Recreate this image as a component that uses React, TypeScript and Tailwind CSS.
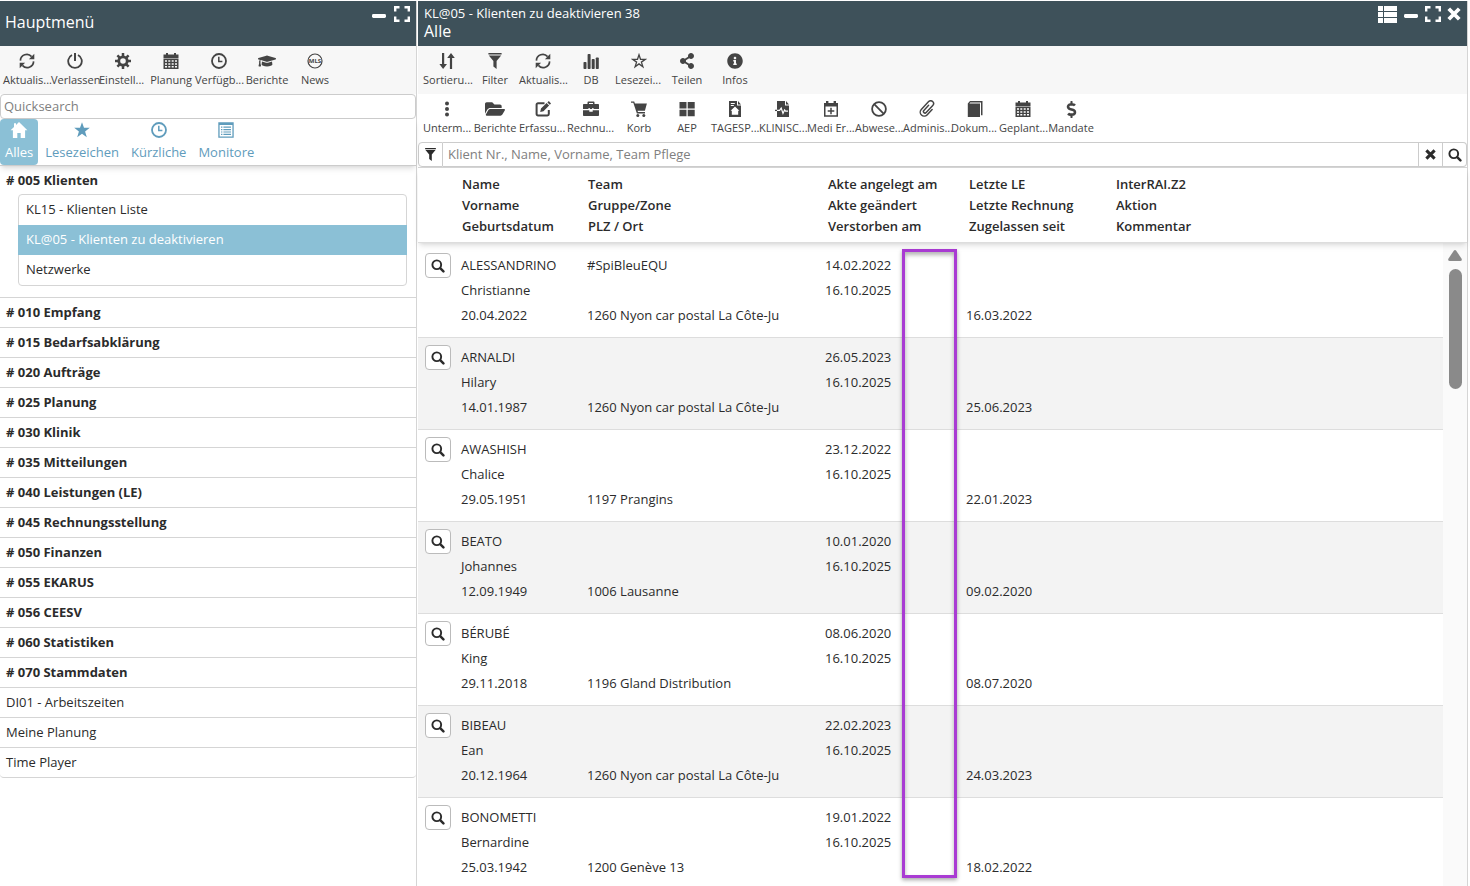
import type { ReactNode } from 'react'
import { FaGraduationCap, FaInfoCircle, FaShareAlt, FaFolderOpen, FaDollarSign } from 'react-icons/fa'

function Svg({ children, className = 'size-4' }: { children: ReactNode; className?: string }) {
  return (
    <svg viewBox="0 0 16 16" className={className} fill="currentColor" stroke="none" aria-hidden="true">
      {children}
    </svg>
  )
}

const line = { fill: 'none', stroke: 'currentColor' }

const RefreshIcon = () => (
  <Svg>
    <path {...line} strokeWidth="1.7" d="M1.4 7.6A6.4 6.4 0 0 1 12.6 3.6M14.6 8.4A6.4 6.4 0 0 1 3.4 12.4" />
    <path d="M15.3.8v5.4H9.9zM.7 15.2V9.8h5.4z" />
  </Svg>
)

const PowerIcon = () => (
  <Svg>
    <path {...line} strokeWidth="1.8" d="M5 2A6.8 6.8 0 1 0 11 2" />
    <path {...line} strokeWidth="2" d="M8 0v8" />
  </Svg>
)

const GearIcon = () => (
  <Svg>
    <circle {...line} cx="8" cy="8" r="4.2" strokeWidth="2.8" />
    <path {...line} strokeWidth="2.5" d="M8 0v3M8 13v3M0 8h3M13 8h3M2.4 2.4l2 2M11.6 11.6l2 2M2.4 13.6l2-2M11.6 4.4l2-2" />
  </Svg>
)

const CalendarIcon = () => (
  <Svg>
    <path d="M3 0h2v1.5h6V0h2v1.5h2.5V5H.5V1.5H3z" />
    <path fillRule="evenodd" d="M.5 5.6h15V16H.5zM2 7.3v1.5h2V7.3zm3.3 0v1.5h2V7.3zm3.4 0v1.5h2V7.3zm3.3 0v1.5h2V7.3zM2 10.2v1.5h2v-1.5zm3.3 0v1.5h2v-1.5zm3.4 0v1.5h2v-1.5zm3.3 0v1.5h2v-1.5zM2 13.1v1.5h2v-1.5zm3.3 0v1.5h2v-1.5zm3.4 0v1.5h2v-1.5zm3.3 0v1.5h2v-1.5z" />
  </Svg>
)

const ClockIcon = () => (
  <Svg>
    <circle {...line} cx="8" cy="8" r="7" strokeWidth="1.8" />
    <path {...line} strokeWidth="1.5" d="M7.8 3.8v4.6h3.6" />
  </Svg>
)

const NewsIcon = () => (
  <Svg>
    <circle {...line} cx="8" cy="8" r="7" strokeWidth="1.2" />
    <path fill="#f7f7f7" d="M2 5.4h12v5.2H2z" />
    <text x="8" y="10.2" textAnchor="middle" fontSize="6" fontWeight="700">MLS</text>
  </Svg>
)

const SortIcon = () => (
  <Svg>
    <path d="M3 0h2.2v11H8l-3.9 5L.4 11H3zM10.9 16h2.2V5h2.7L12 0 8.2 5h2.7z" />
  </Svg>
)

const FilterIcon = ({ className }: { className?: string }) => (
  <Svg className={className}>
    <path d="M1.4 0h13.2v1.5H1.4zM1.8 2.6h12.4L9.6 8v8l-3.2-2.4V8z" />
  </Svg>
)

const BarsIcon = () => (
  <Svg>
    <rect x=".5" y="9" width="3" height="7" rx=".8" />
    <rect x="4.6" y="1" width="3" height="15" rx=".8" />
    <rect x="8.7" y="6" width="3" height="10" rx=".8" />
    <rect x="12.8" y="4.5" width="3" height="11.5" rx=".8" />
  </Svg>
)

const StarOutlineIcon = () => (
  <Svg>
    <path {...line} strokeWidth="1.3" d="M8 1.8l1.5 4.5h4.8l-3.9 2.8 1.5 4.6L8 10.9l-3.9 2.8 1.5-4.6-3.9-2.8h4.8z" />
  </Svg>
)

const StarIcon = () => (
  <Svg>
    <path d="M8 .2l2 5.6h5.8l-4.7 3.6 1.7 5.9L8 11.8l-4.8 3.5 1.7-5.9L.2 5.8H6z" />
  </Svg>
)

const DotsIcon = () => (
  <Svg>
    <circle cx="8" cy="2.4" r="2" />
    <circle cx="8" cy="8" r="2" />
    <circle cx="8" cy="13.6" r="2" />
  </Svg>
)

const EditIcon = () => (
  <Svg>
    <path {...line} strokeWidth="2" d="M9.5 2.2H3a1.4 1.4 0 0 0-1.4 1.4V13A1.4 1.4 0 0 0 3 14.4h9.4a1.4 1.4 0 0 0 1.4-1.4V9" />
    <path d="M5.2 11l.8-3.4 5.6-5.5 2.5 2.5-5.6 5.6zM12.4 1.4L13.8 0 16 2.4l-1.2 1.4z" />
  </Svg>
)

const BriefcaseIcon = () => (
  <Svg>
    <path fillRule="evenodd" d="M4.5 3V1.4Q4.5.5 5.4.5h5.2q.9 0 .9.9V3h3.7q.8 0 .8.8V8h-5.5V7H9.2v1H6.8V7H5.5v1H0V3.8Q0 3 .8 3zM6 3h4V2H6z" />
    <path d="M0 9.3h6.3v1.4h3.4V9.3H16v4.9q0 .8-.8.8H.8q-.8 0-.8-.8z" />
  </Svg>
)

const CartIcon = () => (
  <Svg>
    <path d="M0 .5h3.2l.7 1.9h12l-2 7.4H6.5l.5 1.3h7v1.3H5.9L2.3 1.8H0z" />
    <circle cx="6.8" cy="14.4" r="1.5" />
    <circle cx="12.8" cy="14.4" r="1.5" />
  </Svg>
)

const GridIcon = () => (
  <Svg>
    <path d="M.5 1h7v6.5h-7zM8.7 1h7v6.5h-7zM.5 8.7h7v6.5h-7zM8.7 8.7h7v6.5h-7z" />
  </Svg>
)

const HomeFileIcon = () => (
  <Svg>
    <path fillRule="evenodd" d="M2 0h8v4.4h4V16H2zM3.8 2v1.1h4V2zM3.8 4v1.1h3V4zM8 5.6L3.6 9.7h1.2v4h6.4v-4h1.2z" />
    <path d="M11 0l3 3.4h-3z" />
  </Svg>
)

const PulseFileIcon = () => (
  <Svg>
    <path d="M2 0h8v4.6h4V16H2z" />
    <path d="M11 0l3 3.6h-3z" />
    <path {...line} strokeWidth="1.3" d="M0 9.4h3" />
    <path {...line} stroke="#fff" strokeWidth="1.2" d="M2 9.4h2.6L6.2 7l1.8 5.4L9.6 9l.9 1.2H13" />
  </Svg>
)

const CalendarPlusIcon = () => (
  <Svg>
    <path d="M3 0h2.4v2h5.2V0H13v2h2v3.6H1V2h2z" />
    <path {...line} strokeWidth="1.5" d="M1.75 5v10h12.5V5M8 6.7v6.6M4.7 10h6.6" />
  </Svg>
)

const BanIcon = () => (
  <Svg>
    <circle {...line} cx="8" cy="8" r="6.9" strokeWidth="1.8" />
    <path {...line} strokeWidth="1.8" d="M3.2 3.2l9.6 9.6" />
  </Svg>
)

const ClipIcon = () => (
  <Svg className="size-[18px]">
    <g transform="rotate(43 8 8)">
      <path {...line} strokeWidth="1.3" strokeLinecap="round" d="M11.6 5.2v6.6a3.5 3.5 0 0 1-7 0V2.2a2.5 2.5 0 0 1 5 0v8.6a1.4 1.4 0 0 1-2.8 0V4.6" />
    </g>
  </Svg>
)

const BookIcon = () => (
  <Svg>
    <path d="M3 0h12.5v14.2H14V1.6H3.2L2.4 2.6H13V16H.8V2.6z" />
  </Svg>
)

const MonitorIcon = () => (
  <Svg>
    <path fillRule="evenodd" d="M.3.3h15.4v15.4H.3zM1.6 3v11.4h12.8V3z" />
    <path d="M3 4.6h1.4v1.2H3zM5.4 4.6H13v1.2H5.4zM3 7h1.4v1.2H3zM5.4 7H13v1.2H5.4zM3 9.4h1.4v1.2H3zM5.4 9.4H13v1.2H5.4zM3 11.8h1.4V13H3zM5.4 11.8H13V13H5.4z" />
  </Svg>
)

const HomeIcon = () => (
  <Svg className="h-4 w-5">
    <path d="M8 0l8.4 8.2h-2.3V16H9.7v-5H6.3v5H1.9V8.2H-.4L3 4.9V1.3h2V3z" />
  </Svg>
)

const SearchIcon = () => (
  <Svg className="size-[14px]">
    <circle {...line} cx="6.6" cy="6.6" r="5" strokeWidth="2.2" />
    <path {...line} strokeWidth="2.8" strokeLinecap="round" d="M10.8 10.8l3.4 3.4" />
  </Svg>
)

const CloseIcon = ({ className }: { className?: string }) => (
  <Svg className={className}>
    <path {...line} strokeWidth="4.4" d="M2 2l12 12M14 2L2 14" />
  </Svg>
)

const MinusIcon = () => (
  <Svg>
    <rect x="1" y="8" width="14" height="4" rx="1.4" />
  </Svg>
)

const ExpandIcon = () => (
  <Svg>
    <path {...line} strokeWidth="2.4" d="M1.2 5.5V1.2h4.3M10.5 1.2h4.3v4.3M14.8 10.5v4.3h-4.3M5.5 14.8H1.2v-4.3" />
  </Svg>
)

const ListIcon = () => (
  <svg viewBox="0 0 19 17" className="h-[17px] w-[19px]" fill="currentColor" aria-hidden="true">
    <path d="M0 0h5v5H0zM6 0h13v5H6zM0 6h5v5H0zM6 6h13v5H6zM0 12h5v5H0zM6 12h13v5H6z" />
  </svg>
)

type Tool = { label: string; icon: ReactNode }

const menuTools: Tool[] = [
  { label: 'Aktualis...', icon: <RefreshIcon /> },
  { label: 'Verlassen', icon: <PowerIcon /> },
  { label: 'Einstell...', icon: <GearIcon /> },
  { label: 'Planung', icon: <CalendarIcon /> },
  { label: 'Verfügb...', icon: <ClockIcon /> },
  { label: 'Berichte', icon: <FaGraduationCap className="size-[18px]" /> },
  { label: 'News', icon: <NewsIcon /> },
]

const listTools: Tool[] = [
  { label: 'Sortieru...', icon: <SortIcon /> },
  { label: 'Filter', icon: <FilterIcon /> },
  { label: 'Aktualis...', icon: <RefreshIcon /> },
  { label: 'DB', icon: <BarsIcon /> },
  { label: 'Lesezei...', icon: <StarOutlineIcon /> },
  { label: 'Teilen', icon: <FaShareAlt className="size-4" /> },
  { label: 'Infos', icon: <FaInfoCircle className="size-4" /> },
]

const clientTools: Tool[] = [
  { label: 'Unterm...', icon: <DotsIcon /> },
  { label: 'Berichte', icon: <FaFolderOpen className="size-5" /> },
  { label: 'Erfassu...', icon: <EditIcon /> },
  { label: 'Rechnu...', icon: <BriefcaseIcon /> },
  { label: 'Korb', icon: <CartIcon /> },
  { label: 'AEP', icon: <GridIcon /> },
  { label: 'TAGESP...', icon: <HomeFileIcon /> },
  { label: 'KLINISC...', icon: <PulseFileIcon /> },
  { label: 'Medi Er...', icon: <CalendarPlusIcon /> },
  { label: 'Abwese...', icon: <BanIcon /> },
  { label: 'Adminis...', icon: <ClipIcon /> },
  { label: 'Dokum...', icon: <BookIcon /> },
  { label: 'Geplant...', icon: <CalendarIcon /> },
  { label: 'Mandate', icon: <FaDollarSign className="size-[17px]" /> },
]

const tabs = [
  { label: 'Alles', icon: <HomeIcon />, active: true },
  { label: 'Lesezeichen', icon: <StarIcon /> },
  { label: 'Kürzliche', icon: <ClockIcon /> },
  { label: 'Monitore', icon: <MonitorIcon /> },
]

const clientMenu = ['KL15 - Klienten Liste', 'KL@05 - Klienten zu deaktivieren', 'Netzwerke']

const sections = [
  '# 010 Empfang',
  '# 015 Bedarfsabklärung',
  '# 020 Aufträge',
  '# 025 Planung',
  '# 030 Klinik',
  '# 035 Mitteilungen',
  '# 040 Leistungen (LE)',
  '# 045 Rechnungsstellung',
  '# 050 Finanzen',
  '# 055 EKARUS',
  '# 056 CEESV',
  '# 060 Statistiken',
  '# 070 Stammdaten',
  'DI01 - Arbeitszeiten',
  'Meine Planung',
  'Time Player',
]

const columns = [
  ['Name', 'Vorname', 'Geburtsdatum'],
  ['Team', 'Gruppe/Zone', 'PLZ / Ort'],
  ['Akte angelegt am', 'Akte geändert', 'Verstorben am'],
  ['Letzte LE', 'Letzte Rechnung', 'Zugelassen seit'],
  ['InterRAI.Z2', 'Aktion', 'Kommentar'],
]

const clients = [
  { name: 'ALESSANDRINO', first: 'Christianne', born: '20.04.2022', team: '#SpiBleuEQU', city: '1260 Nyon car postal La Côte-Ju', created: '14.02.2022', admitted: '16.03.2022' },
  { name: 'ARNALDI', first: 'Hilary', born: '14.01.1987', team: '', city: '1260 Nyon car postal La Côte-Ju', created: '26.05.2023', admitted: '25.06.2023' },
  { name: 'AWASHISH', first: 'Chalice', born: '29.05.1951', team: '', city: '1197 Prangins', created: '23.12.2022', admitted: '22.01.2023' },
  { name: 'BEATO', first: 'Johannes', born: '12.09.1949', team: '', city: '1006 Lausanne', created: '10.01.2020', admitted: '09.02.2020' },
  { name: 'BÉRUBÉ', first: 'King', born: '29.11.2018', team: '', city: '1196 Gland Distribution', created: '08.06.2020', admitted: '08.07.2020' },
  { name: 'BIBEAU', first: 'Ean', born: '20.12.1964', team: '', city: '1260 Nyon car postal La Côte-Ju', created: '22.02.2023', admitted: '24.03.2023' },
  { name: 'BONOMETTI', first: 'Bernardine', born: '25.03.1942', team: '', city: '1200 Genève 13', created: '19.01.2022', admitted: '18.02.2022' },
]

function Toolbar({ tools, className }: { tools: Tool[]; className: string }) {
  return (
    <div className={`flex h-12 shrink-0 ${className}`}>
      {tools.map((t) => (
        <button key={t.label} type="button" className="flex w-12 shrink-0 flex-col items-center pt-[5px] text-[#444]">
          <span className="flex h-5 items-center">{t.icon}</span>
          <span
            className={`mt-px w-full text-[11px] leading-4 whitespace-nowrap ${t.label.endsWith('...') ? 'text-left' : 'text-center'}`}
          >
            {t.label}
          </span>
        </button>
      ))}
    </div>
  )
}

function Cols() {
  return (
    <colgroup>
      <col className="w-[43px]" />
      <col className="w-[126px]" />
      <col className="w-[238px]" />
      <col className="w-[141px]" />
      <col className="w-[147px]" />
      <col />
    </colgroup>
  )
}

function Cell({ lines }: { lines: string[] }) {
  return (
    <td className="p-0 pt-[7px] pb-[9px] align-top">
      {lines.map((l, i) => (
        <div key={i} className="h-[25px] leading-[25px] whitespace-nowrap">{l}</div>
      ))}
    </td>
  )
}

function MainMenu() {
  return (
    <aside className="flex w-[417px] shrink-0 flex-col border-r border-[#d5d5d5]">
      <header className="flex h-[45px] shrink-0 bg-[#3e515a] px-[6px] text-white">
        <h1 className="-ml-px flex-1 pt-[11px] text-[16px] leading-5">Hauptmenü</h1>
        <div className="flex gap-[7px] pt-[5px]">
          <button type="button" aria-label="Minimieren" className="h-4"><MinusIcon /></button>
          <button type="button" aria-label="Vollbild" className="h-4"><ExpandIcon /></button>
        </div>
      </header>
      <Toolbar tools={menuTools} className="bg-[#f7f7f7] pl-[3px]" />
      <input
        type="text"
        aria-label="Quicksearch"
        placeholder="Quicksearch"
        className="h-[25px] w-full shrink-0 rounded border border-[#ccc] bg-white px-[3px] pb-[2px] text-[13px] outline-none placeholder:text-[#808080]"
      />
      <nav className="relative z-10 flex h-[47px] shrink-0 gap-[2px] border-b border-[#ccc] bg-white shadow-md">
        {tabs.map((t) => (
          <button
            key={t.label}
            type="button"
            className={`flex flex-col items-center rounded px-[5px] pt-[3px] text-[13px] ${t.active ? 'bg-[#8bc0d6] text-white' : 'text-[#5f9cbc]'}`}
          >
            {t.icon}
            <span className="mt-1 leading-5">{t.label}</span>
          </button>
        ))}
      </nav>
      <ul>
        <li className="pb-[11px]">
          <a href="#005" className="block px-[6px] pt-1 pb-1 font-bold leading-5">
            # 005 Klienten
          </a>
          <ul className="mr-[9px] ml-[18px] rounded border border-[#d5d5d5]">
            {clientMenu.map((m) => (
              <li key={m}>
                <a
                  href="#klienten"
                  className={`block h-[30px] px-[7px] leading-[28px] ${m.startsWith('KL@05') ? '-mx-px bg-[#8bc0d6] pl-2 text-white' : ''}`}
                >
                  {m}
                </a>
              </li>
            ))}
          </ul>
        </li>
        {sections.map((s) => (
          <li key={s} className="h-[30px] border-t border-[#d5d5d5] last:h-[31px] last:rounded-b last:border-b">
            <a href="#menu" className={`block px-[6px] leading-[29px] ${s.startsWith('#') ? 'font-bold' : ''}`}>
              {s}
            </a>
          </li>
        ))}
      </ul>
    </aside>
  )
}

function ClientList() {
  return (
    <main className="ml-px mr-[2px] flex min-w-0 flex-1 flex-col border-r border-[#d5d5d5]">
      <header className="flex h-[45px] shrink-0 bg-[#3e515a] px-[6px] text-white">
        <div className="flex-1 pt-[3px]">
          <p className="text-[13px] leading-[18px]">KL@05 - Klienten zu deaktivieren 38</p>
          <h2 className="text-[16px] leading-[18px]">Alle</h2>
        </div>
        <div className="flex gap-[6px] pt-[5px]">
          <button type="button" aria-label="Liste" className="h-4"><ListIcon /></button>
          <button type="button" aria-label="Minimieren" className="h-4"><MinusIcon /></button>
          <button type="button" aria-label="Vollbild" className="h-4"><ExpandIcon /></button>
          <button type="button" aria-label="Schliessen" className="h-4"><CloseIcon className="size-[14px]" /></button>
        </div>
      </header>
      <Toolbar tools={listTools} className="bg-[#f7f7f7] pl-[5px]" />
      <Toolbar tools={clientTools} className="pl-[5px]" />
      <form className="flex h-[26px] shrink-0 border-b border-[#d5d5d5]">
        <button type="button" aria-label="Filter" className="flex w-[25px] items-center justify-center rounded-l border border-[#ccc]">
          <FilterIcon className="size-[13px]" />
        </button>
        <input
          type="text"
          aria-label="Klienten suchen"
          placeholder="Klient Nr., Name, Vorname, Team Pflege"
          className="min-w-0 flex-1 border-y border-[#ccc] px-[5px] text-[13px] outline-none placeholder:text-[#808080]"
        />
        <button type="button" aria-label="Leeren" className="flex w-[25px] items-center justify-center border border-[#ccc]">
          <CloseIcon className="size-[11px]" />
        </button>
        <button type="button" aria-label="Suchen" className="flex w-6 items-center justify-center rounded-r border border-l-0 border-[#ccc]">
          <SearchIcon />
        </button>
      </form>

      <div className="relative z-10 border-b border-[#ddd] bg-white pt-[6px] pr-6 pb-[5px] shadow-md">
        <table className="w-full table-fixed border-collapse text-left">
          <Cols />
          <thead>
            <tr>
              <th className="p-0" />
              {columns.map((c, i) => (
                <th key={c[0]} className={`p-0 font-semibold ${i < 2 ? 'pl-px' : 'pl-[3px]'}`}>
                  {c.map((l) => (
                    <div key={l} className="leading-[21px] whitespace-nowrap">{l}</div>
                  ))}
                </th>
              ))}
            </tr>
          </thead>
        </table>
      </div>

      <div className="relative flex min-h-0 flex-1 overflow-hidden">
        <div className="min-w-0 flex-1 pt-[3px]">
          <table className="w-full table-fixed border-collapse">
            <Cols />
            <tbody>
              {clients.map((c) => (
                <tr key={c.name} className="border-b border-[#ddd] even:bg-[#f3f3f3]">
                  <td className="p-0 pt-[7px] pl-[7px] align-top">
                    <button
                      type="button"
                      aria-label={`${c.name} öffnen`}
                      className="flex h-[25px] w-[26px] items-center justify-center rounded border border-[#bbb] bg-white"
                    >
                      <SearchIcon />
                    </button>
                  </td>
                  <Cell lines={[c.name, c.first, c.born]} />
                  <Cell lines={[c.team, '', c.city]} />
                  <Cell lines={[c.created, '16.10.2025', '']} />
                  <Cell lines={['', '', c.admitted]} />
                  <td />
                </tr>
              ))}
            </tbody>
          </table>
        </div>
        {/* scrollbar */}
        <div className="flex w-6 shrink-0 flex-col items-center gap-2 bg-[#fafafa] pt-[7px] text-[#8a8a8a]">
          <svg viewBox="0 0 14 11" className="h-[11px] w-[14px] shrink-0" fill="currentColor" aria-hidden="true">
            <path d="M5.8.7Q7-.7 8.2.7l5.4 8q.8 2.3-1.4 2.3H1.8Q-.4 11 .4 8.7z" />
          </svg>
          <div className="h-[120px] w-[13px] shrink-0 rounded-full bg-[#8a8a8a]" />
        </div>
        {/* highlighted column */}
        <div className="pointer-events-none absolute top-[6px] left-[484px] h-[629px] w-[55px] border-[3px] border-[#a93bd3] shadow-[0_2px_4px_rgba(0,0,0,0.35),inset_0_3px_4px_rgba(0,0,0,0.3)]" />
      </div>
    </main>
  )
}

export default function App() {
  return (
    <div className="flex h-screen overflow-hidden bg-white pt-px font-['Open_Sans',sans-serif] text-[13px] text-[#2b2b2b]">
      <MainMenu />
      <ClientList />
    </div>
  )
}
